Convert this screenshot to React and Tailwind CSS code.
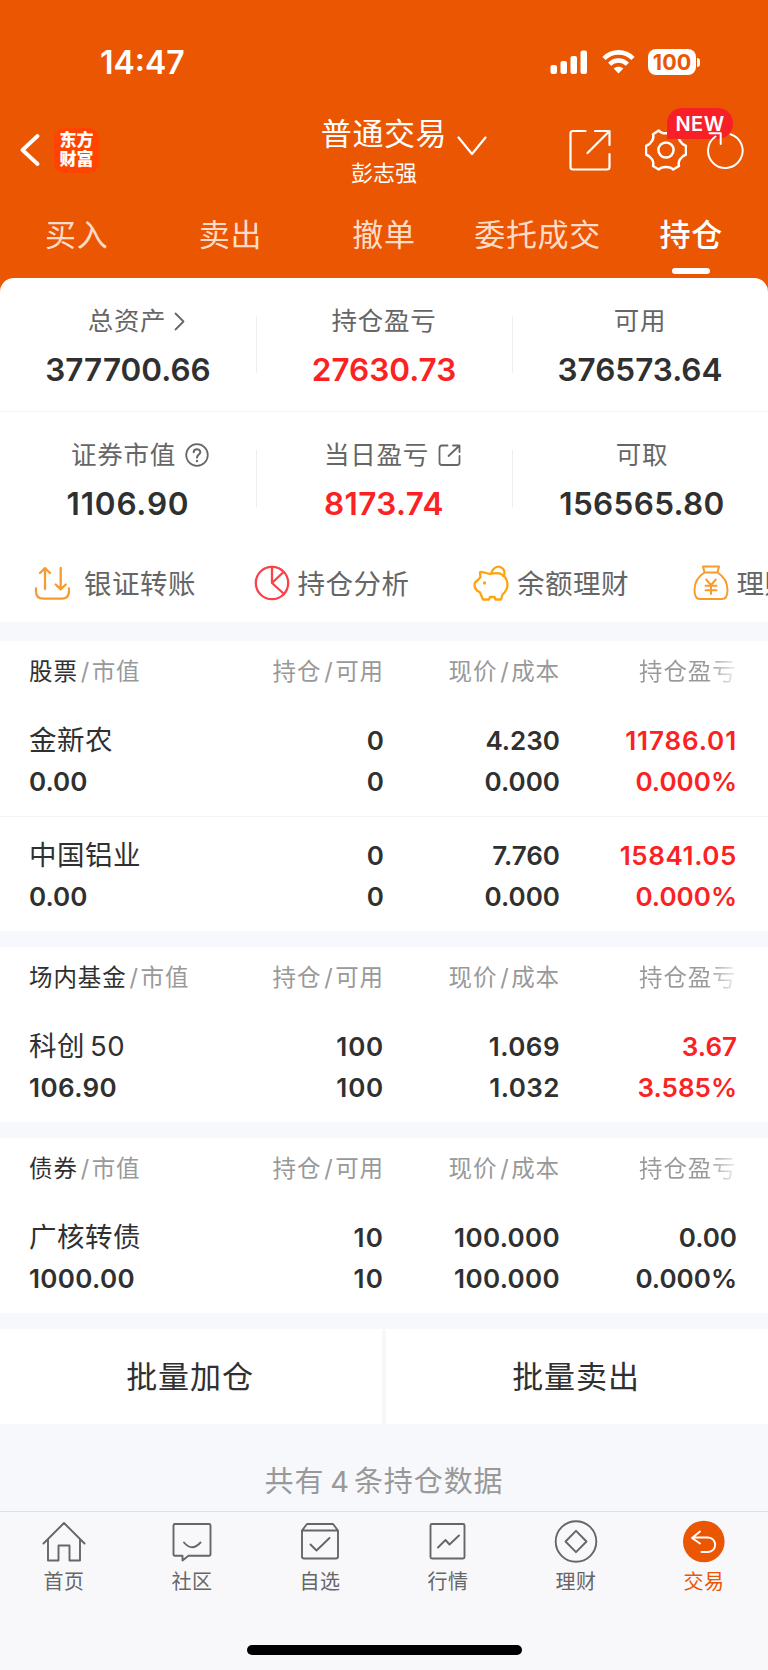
import { clsx } from "clsx"

const tabs = ["买入", "卖出", "撤单", "委托成交", "持仓"]

const summary = [
    [
        { label: "总资产", value: "377700.66", icon: "chevron" },
        { label: "持仓盈亏", value: "27630.73", red: true },
        { label: "可用", value: "376573.64" },
    ],
    [
        { label: "证券市值", value: "1106.90", icon: "help" },
        { label: "当日盈亏", value: "8173.74", icon: "share", red: true },
        { label: "可取", value: "156565.80", shifted: true },
    ],
]

const sections = [
    {
        title: "股票",
        rows: [
            { name: "金新农", value: "0.00", held: "0", usable: "0", price: "4.230", cost: "0.000", profit: "11786.01", rate: "0.000%", red: true },
            { name: "中国铝业", value: "0.00", held: "0", usable: "0", price: "7.760", cost: "0.000", profit: "15841.05", rate: "0.000%", red: true },
        ],
    },
    {
        title: "场内基金",
        rows: [
            { name: "科创", suffix: "50", value: "106.90", held: "100", usable: "100", price: "1.069", cost: "1.032", profit: "3.67", rate: "3.585%", red: true },
        ],
    },
    {
        title: "债券",
        rows: [
            { name: "广核转债", value: "1000.00", held: "10", usable: "10", price: "100.000", cost: "100.000", profit: "0.00", rate: "0.000%" },
        ],
    },
]

const stroke = { fill: "none", stroke: "currentColor", strokeLinecap: "round", strokeLinejoin: "round" }

// Inter's "1" is narrow, so numbers with many of them get a little extra spacing
function Figure({ children }) {
    const ones = children.split("1").length - 1
    return <span style={{ letterSpacing: `${(0.09 * ones) / children.length}em` }}>{children}</span>
}

function StatusBar() {
    return (
        <div className="flex h-[100px] items-start justify-between pl-[100px] pr-[68px] pt-[42px]">
            <span className="pt-px text-[32px] font-semibold leading-[40px]">14:47</span>
            <div className="flex h-[40px] items-center">
                <svg className="mr-[14px] h-6 w-[38px]" viewBox="0 0 38 24" fill="currentColor">
                    <rect x="0.500" y="15" width="6.5" height="9" rx="2" />
                    <rect x="10.500" y="11" width="6.5" height="13" rx="2" />
                    <rect x="20.500" y="6" width="6.5" height="18" rx="2" />
                    <rect x="30.5" y="0.5" width="6.5" height="23.5" rx="2" />
                </svg>
                <svg className="mr-[13px] h-6 w-[33px]" viewBox="0 0 33 24" fill="none" stroke="currentColor">
                    <path d="M2 8.5C10 .3 23 .3 31 8.5" strokeWidth="4.6" />
                    <path d="M7.6 14.2C12.6 9.3 20.4 9.3 25.4 14.2" strokeWidth="4.4" />
                    <path d="M16.5 23.5 11.7 18.6C14.4 16 18.6 16 21.3 18.6Z" fill="currentColor" stroke="none" />
                </svg>
                <span className="flex h-[26px] w-[48px] items-center justify-center rounded-[8px] bg-white pt-px text-[21.5px] font-bold text-[#eb5603]">100</span>
                <span className="ml-[1px] h-[9px] w-[3px] rounded-r-full bg-white" />
            </div>
        </div>
    )
}

function TitleBar() {
    return (
        <div className="flex h-[98px] justify-between pl-5 pr-6">
            <div className="flex h-[100px] w-[300px] shrink-0 items-center gap-[14px]">
                <svg className="h-[34px] w-[20px]" viewBox="0 0 20 34" {...stroke} strokeWidth="3.8">
                    <path d="M17.5 3 2.5 17 17.5 31" />
                </svg>
                <div className="flex h-[45px] w-[45px] flex-col items-center justify-center rounded-[10px] bg-[#ff4400] text-[17px] font-black leading-[19px]">
                    <span>东方</span>
                    <span>财富</span>
                </div>
            </div>
            <div className="flex w-[180px] shrink-0 items-start">
                <div className="flex w-[128px] flex-col items-center pt-[12px]">
                    <span className="whitespace-nowrap text-[31px] leading-[44px] tracking-[0.6px]">普通交易</span>
                    <span className="mt-px text-[22px] leading-[32px]">彭志强</span>
                </div>
                <svg className="ml-[9px] mt-[36px] h-[20px] w-[30px]" viewBox="0 0 30 20" {...stroke} strokeWidth="2.2">
                    <path d="M1.5 1.5 15 18 28.5 1.5" />
                </svg>
            </div>
            <div className="relative flex h-[100px] flex-1 items-center justify-end">
                <svg className="mr-[34px] h-[42px] w-[42px] shrink-0" viewBox="0 0 42 42" {...stroke} strokeWidth="2.2">
                    <path d="M16.5 2H4Q1.500 2 1.500 4.500V38Q1.500 40.500 4 40.500H38Q40.500 40.500 40.500 38V25M26 2H40.500V16M40 2.500 18.500 24" />
                </svg>
                <svg className="mr-[20px] h-[42px] w-[42px] shrink-0" viewBox="0 0 42 42" {...stroke} strokeWidth="2.500">
                    <path d="M13.800 1.500C16.500 5.300 25.500 5.300 28.200 1.500L34 5.200C32.600 9.600 35.600 14.800 41 17V25.500C35.600 27.500 32.600 32.500 34 37L28.200 40.500C25.500 37 16.500 37 13.800 40.500L8 37C9.400 32.500 6.400 27.500 1 25.500V17C6.400 14.800 9.400 9.600 8 5.200Z" />
                    <circle cx="21" cy="21" r="7.600" />
                </svg>
                <span className="absolute right-[11px] top-[8px] flex h-[31px] w-[66px] items-center justify-center rounded-[15px] rounded-bl-none bg-[#f72027] text-[20px] font-semibold tracking-[0.5px]">
                    NEW
                </span>
                <svg className="relative h-[40px] w-[37px] shrink-0" viewBox="0 0 37 40" {...stroke} strokeWidth="2">
                    <path d="M23.500 4.200A17.300 17.300 0 1 1 8.500 6.500M2.500 3.200H13.700V14" />
                </svg>
            </div>
        </div>
    )
}

function LabelIcon({ name }) {
    if (name === "chevron") {
        return (
            <svg className="ml-[8px] h-[19px] w-[11px]" viewBox="0 0 11 19" {...stroke} strokeWidth="1.800">
                <path d="M1.500 1.500 9.500 9.500 1.500 17.500" />
            </svg>
        )
    }
    if (name === "help") {
        return (
            <svg className="ml-[9px] h-[24px] w-[24px]" viewBox="0 0 24 24" {...stroke} strokeWidth="1.700">
                <circle cx="12" cy="12" r="10.800" />
                <path d="M8.700 9.300C8.800 5 15.400 5.200 15.300 9.200 15.200 11.500 12.100 11.700 12 14.600" strokeWidth="2" />
                <circle cx="12" cy="18" r="1.200" fill="currentColor" stroke="none" />
            </svg>
        )
    }
    return (
        <svg className="ml-[9px] h-[23px] w-[23px]" viewBox="0 0 23 23" {...stroke} strokeWidth="1.800">
            <path d="M9.500 1.500H4Q1.500 1.500 1.500 4V18.500Q1.500 21 4 21H19Q21.500 21 21.500 18.500V12M15 1.500H21.500V8M21 2 10.500 12" />
        </svg>
    )
}

function Summary() {
    return (
        <div className="rounded-t-[14px] bg-white">
            {summary.map((row, i) => (
                <div key={i} className={clsx("grid h-[134px] grid-cols-3", i === 0 && "border-b border-[#f3f3f5]")}>
                    {row.map((cell, j) => (
                        <div
                            key={cell.label}
                            className={clsx("relative flex flex-col items-center pt-[23px]", cell.shifted && "pl-[4px]")}
                        >
                            <span
                                className={clsx(
                                    "flex h-[40px] items-center text-[25.5px] tracking-[0.7px] text-[#666]",
                                    cell.icon === "chevron" && "pl-[17px]",
                                    cell.icon === "help" && "pl-[24px]",
                                    cell.icon === "share" && "pl-[17px]"
                                )}
                            >
                                {cell.label}
                                {cell.icon && <LabelIcon name={cell.icon} />}
                            </span>
                            <span className={clsx("mt-[9px] text-[31.500px] font-semibold leading-[40px]", cell.red ? "text-[#fa2222]" : "text-[#303030]")}>
                                <Figure>{cell.value}</Figure>
                            </span>
                            {j < 2 && <span className="absolute -right-px top-[38px] h-[57px] w-px bg-[#eeeef0]" />}
                        </div>
                    ))}
                </div>
            ))}
        </div>
    )
}

const tools = [
    {
        label: "银证转账",
        icon: (
            <svg className="mr-[14px] h-[36px] w-[36px] text-[#f69b2f]" viewBox="0 0 36 36" {...stroke} strokeWidth="2.300">
                <path d="M2 23.500V26Q2 33.700 9.500 33.700H27.500Q35 33.700 35 26V23.500M11 24V3.500M6 8 11 3.200 16 8M26.700 3V24M21.700 19.500 26.700 24.300 31.700 19.500" />
            </svg>
        ),
    },
    {
        label: "持仓分析",
        icon: (
            <svg className="mr-[8px] h-[36px] w-[36px] text-[#fa4248]" viewBox="0 0 36 36" {...stroke} strokeWidth="2.300">
                <circle cx="18" cy="18" r="16.200" />
                <path d="M18 2V18L29.500 7M18 18 30 29" />
            </svg>
        ),
    },
    {
        label: "余额理财",
        icon: (
            <svg className="mr-[8px] h-[36px] w-[36px] text-[#fca510]" viewBox="0 0 36 36" {...stroke} strokeWidth="2.300">
                <path d="M17 9 9.500 7.200Q7 6.200 7 8L7.500 12 5 15 2.500 17Q1.500 18 1.500 19.500 1.500 23.500 4 25.500L7 27.500 10 34.500H16L17 32H21.500L22.500 34.500H28L29.500 29.500Q34.500 25.500 34.500 19 33.500 11 27 8.500 22 7.700 17 9Z" />
                <path d="M18.500 7.500Q21 1.500 26 1.700 32 3 31.500 9.500L30 11" />
                <circle cx="11.500" cy="18" r="1.700" fill="currentColor" stroke="none" />
            </svg>
        ),
    },
    {
        label: "理财",
        icon: (
            <svg className="mr-[8px] h-[36px] w-[36px] text-[#f89b2b]" viewBox="0 0 36 36" {...stroke} strokeWidth="2">
                <path d="M10 1.500H26L24.500 7.500H11.500ZM11.500 7.500C5 11.500 1.500 18.500 1.500 25 1.500 31.500 3.500 34 7 34H29C32.500 34 34.500 31.500 34.500 25 34.500 18.500 31 11.500 24.500 7.500" />
                <path d="M13.200 14.500 18 20.200 22.800 14.500M18 20.200V29M12.500 20.700H23.500M12.500 25.200H23.500" />
            </svg>
        ),
    },
]

function Tools() {
    return (
        <div className="flex h-[76px] overflow-hidden bg-white pl-[34px]">
            {tools.map((tool) => (
                <div key={tool.label} className="flex h-[74px] w-[219.500px] shrink-0 items-center">
                    {tool.icon}
                    <span className="whitespace-nowrap pt-[3px] text-[27.500px] tracking-[0.500px] text-[#666]">{tool.label}</span>
                </div>
            ))}
        </div>
    )
}

const columns = "grid grid-cols-[179px_176px_176px_177px] pl-[29px]"

function Section({ title, rows }) {
    return (
        <section className="mb-4 bg-white">
            <div className={clsx(columns, "h-[61px] items-center whitespace-nowrap pt-[2px] text-right text-[23.500px] tracking-[0.900px] text-[#999]")}>
                <span className="text-left">
                    <span className="text-[#303030]">{title}</span>
                    <Slash />
                    市值
                </span>
                <span>持仓<Slash />可用</span>
                <span>现价<Slash />成本</span>
                <span className="ml-[79px] overflow-hidden bg-linear-to-r from-[#999] from-70% to-[#99999920] bg-clip-text text-left text-transparent">持仓盈亏</span>
            </div>
            {rows.map((row, i) => (
                <div
                    key={row.name}
                    className={clsx(columns, "h-[114px] text-right text-[26px] font-semibold leading-[41px] text-[#303030]", i > 0 && "box-content border-t border-[#f3f3f5]")}
                >
                    <div className="pt-[18px] text-left">
                        <div className="whitespace-nowrap text-[27.500px] font-normal tracking-[0.500px]">
                            {row.name}
                            {row.suffix && <span className="ml-[5px]">{row.suffix}</span>}
                        </div>
                        <div><Figure>{row.value}</Figure></div>
                    </div>
                    <div className="pt-[18px]">
                        <div><Figure>{row.held}</Figure></div>
                        <div><Figure>{row.usable}</Figure></div>
                    </div>
                    <div className="pt-[18px]">
                        <div><Figure>{row.price}</Figure></div>
                        <div><Figure>{row.cost}</Figure></div>
                    </div>
                    <div className={clsx("pt-[18px]", row.red && "text-[#fa2222]")}>
                        <div><Figure>{row.profit}</Figure></div>
                        <div><Figure>{row.rate}</Figure></div>
                    </div>
                </div>
            ))}
        </section>
    )
}

function Slash() {
    return <span className="ml-[3px] mr-[1.500px]">/</span>
}

const nav = [
    {
        label: "首页",
        icon: <path d="M1.500 22.500 22 2 42.500 22.500M6 18.500V39.500H16.500V24.500H27.500V39.500H38V18.500" />,
    },
    {
        label: "社区",
        icon: (
            <>
                <path d="M4.500 3H39Q40.500 3 40.500 4.500V33Q40.500 34.700 39 34.700H18.500L12.500 39.500V34.700H5Q3.500 34.700 3.500 33V4.500Q3.500 3 5 3Z" />
                <path d="M14 21.500Q22 31 30.500 21.500" />
            </>
        ),
    },
    {
        label: "自选",
        icon: <path d="M4 9.500 9 3H35L40 9.500M4 9.500H40V35.500Q40 37.500 38 37.500H6Q4 37.500 4 35.500ZM12.500 23.500 18.500 29.500 31.500 17" />,
    },
    {
        label: "行情",
        icon: (
            <>
                <rect x="4.500" y="3" width="34" height="34.500" rx="1.500" />
                <path d="M12 26.500 19.500 19 23.500 23.500 33 14.500" />
            </>
        ),
    },
    {
        label: "理财",
        icon: (
            <>
                <circle cx="22" cy="20.500" r="20.300" />
                <path d="M22 9.800 32.500 20.500 22 31.200 11.500 20.500Z" />
            </>
        ),
    },
    {
        label: "交易",
        active: true,
        icon: (
            <>
                <circle cx="21.800" cy="20.500" r="20.800" fill="#eb5603" stroke="none" />
                <path d="M18 10.500 10 17 18 22.500M10.500 16.500H26C35.500 16.500 35.500 31 26 31H19.500" stroke="#fff" />
            </>
        ),
    },
]

function BottomNav() {
    return (
        <nav className="flex h-[159px] flex-col items-center justify-between border-t border-[#dfe0e3] bg-[#f8f8fb] pb-[15px]">
            <div className="grid w-full grid-cols-6 pt-2">
                {nav.map((item) => (
                    <div key={item.label} className={clsx("flex flex-col items-center", item.active ? "text-[#eb5603]" : "text-[#666]")}>
                        <svg className="h-[44px] w-[44px] overflow-visible" viewBox="0 -1 44 44" {...stroke} strokeWidth="1.900">
                            {item.icon}
                        </svg>
                        <span className="mt-[4px] text-[20px] leading-[28px] tracking-[0.500px]">{item.label}</span>
                    </div>
                ))}
            </div>
            <div className="h-[10px] w-[275px] rounded-full bg-black" />
        </nav>
    )
}

export default function App() {
    return (
        <div className="flex h-[1670px] w-[768px] flex-col overflow-hidden bg-[#f7f8fb] font-['Inter','Noto_Sans_CJK_SC',sans-serif]">
            <div className="bg-[#eb5603]">
                <header className="text-white">
                    <StatusBar />
                    <TitleBar />
                    <div className="grid h-[80px] grid-cols-5">
                        {tabs.map((tab, i) => (
                            <div key={tab} className="flex flex-col items-center pt-[14px]">
                                <span className={clsx("whitespace-nowrap text-[31px] leading-[46px] tracking-[0.700px]", i === 4 ? "font-medium" : "text-[#ffdcc8]")}>{tab}</span>
                                {i === 4 && <span className="mt-[10px] h-[6px] w-[38px] rounded-[3px] bg-white" />}
                            </div>
                        ))}
                    </div>
                </header>
                <Summary />
            </div>
            <Tools />
            <div className="mt-[18.500px]">
                {sections.map((section) => (
                    <Section key={section.title} {...section} />
                ))}
            </div>
            <div className="grid h-[95.500px] shrink-0 grid-cols-2 gap-1 text-[31px] tracking-[0.900px] text-[#303030]">
                <button className="bg-white pr-[2px] pt-[2px]">批量加仓</button>
                <button className="bg-white pr-[2px] pt-[2px]">批量卖出</button>
            </div>
            <p className="flex h-[87px] items-center justify-center pt-[29px] text-[29px] tracking-[0.900px] text-[#999]">
                共有<span className="ml-[6px] mr-[4px]">4</span>条持仓数据
            </p>
            <BottomNav />
        </div>
    )
}
